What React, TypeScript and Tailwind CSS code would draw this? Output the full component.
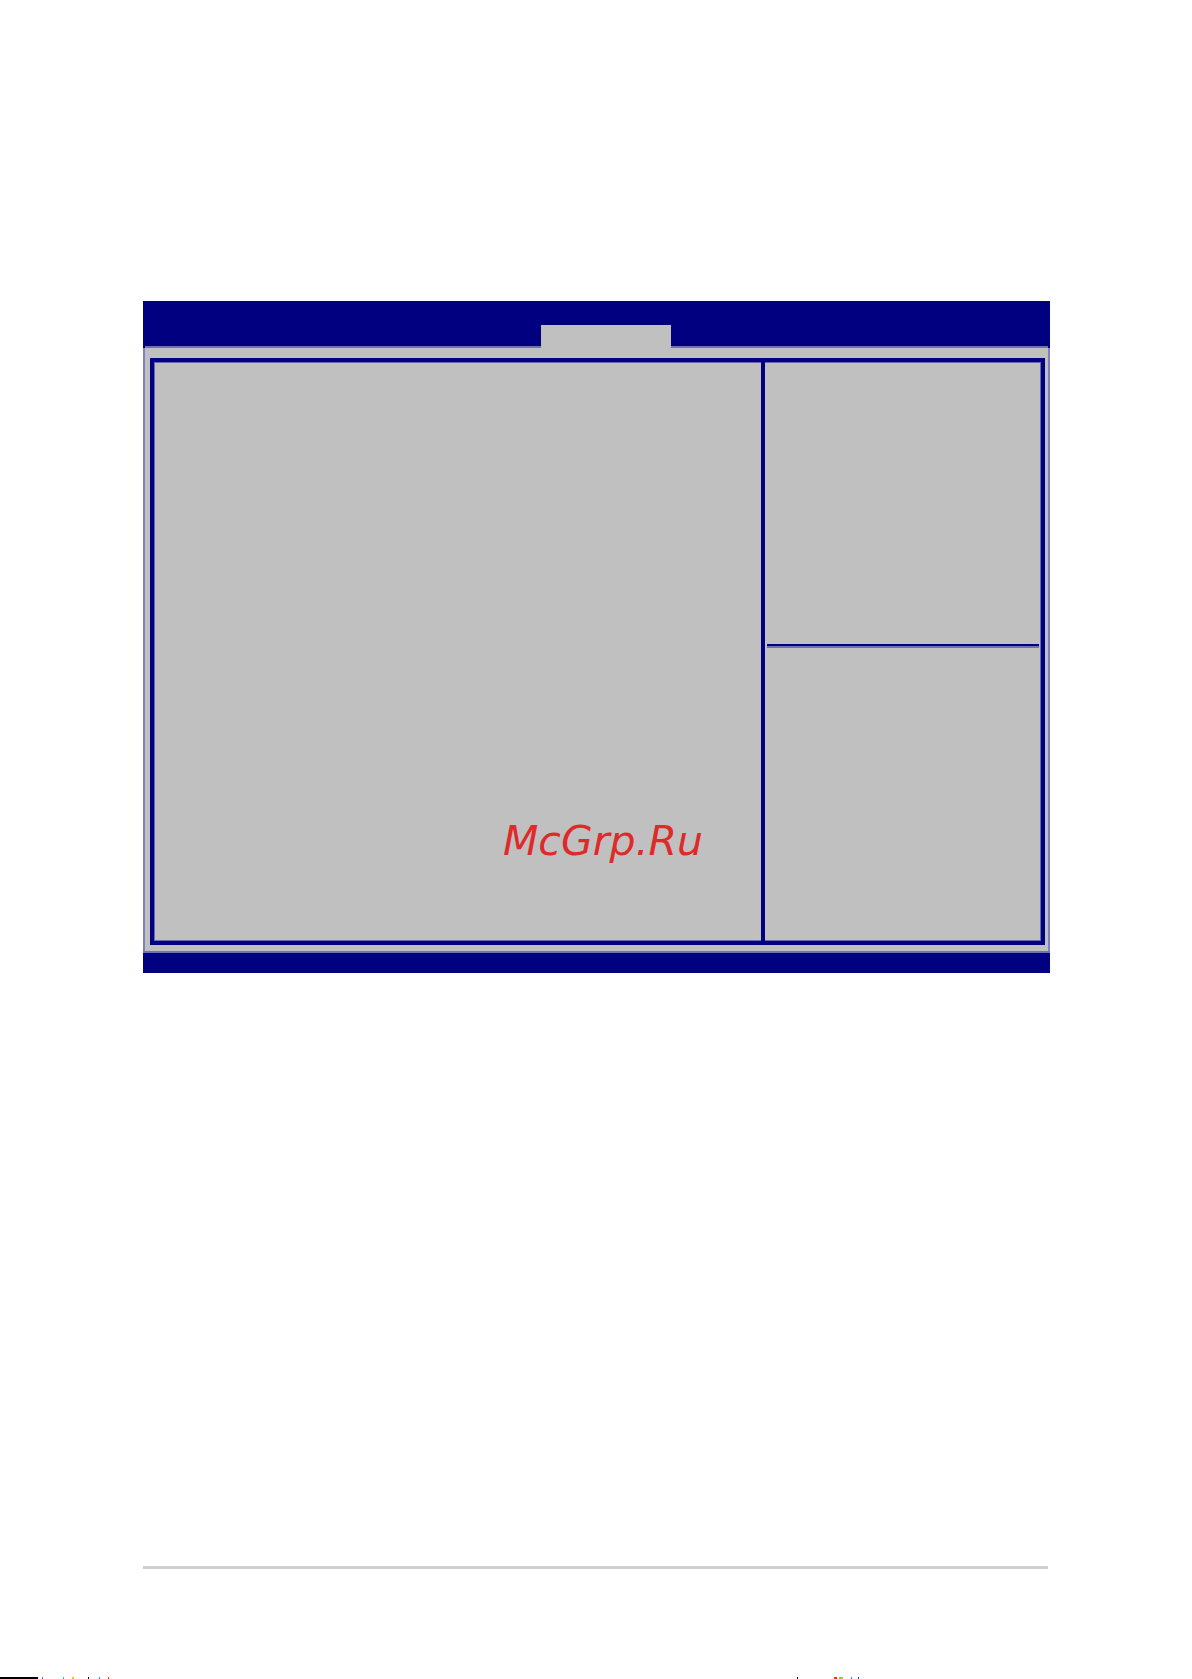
import React from 'react'

const NAVY = 'bg-[#000080]'

function Header() {
  return (
    <div className={`flex h-[47px] ${NAVY} border-x-2 border-[#000080]`}>
      <div className="w-[396px] border-b-2 border-[#7070b8]" />
      <div className="w-[130px] h-[23px] self-end bg-[#c0c0c0]" />
      <div className="flex-1 border-b-2 border-[#7070b8]" />
    </div>
  )
}

function Panels() {
  return (
    <div className="relative flex h-[587px] border-4 border-[#000080] bg-[#c0c0c0] shadow-[inset_0_0_0_1px_#6a6ab4]">
      {/* main area */}
      <div className="relative w-[607px]">
        <span
          className="absolute left-[349px] top-[459px] text-[41px] leading-[41px] italic whitespace-nowrap text-[#df2a2a]"
          style={{ fontFamily: '"DejaVu Sans", "Noto Sans", sans-serif' }}
        >
          McGrp.Ru
        </span>
      </div>
      <div className={`w-[4px] ${NAVY}`} />
      {/* help column */}
      <div className="w-[276px] flex flex-col px-[2px] pt-[282px]">
        <div className={`h-[2px] ${NAVY}`} />
        <div className="h-[2px] bg-[#6e6eb6]" />
      </div>
    </div>
  )
}

export default function App() {
  return (
    <div className="w-[1192px] h-[1679px] bg-white flex flex-col">
      <div className="pt-[301px] pl-[143px]">
        <div className="w-[907px]">
          <Header />
          <div className="bg-[#c0c0c0] border-x-2 border-[#8080c0] pt-[10px] pb-[6px] pl-[5px] pr-[3px]">
            <Panels />
          </div>
          <div className={`h-[22px] ${NAVY} border-t-2 border-[#7070b8]`} />
        </div>
      </div>

      <div className="mt-[593px] ml-[143px] w-[905px] h-[3px] bg-[#d0d0d0]" />

      {/* scan specks along the bottom edge */}
      <div className="mt-auto flex items-end h-[2px]">
        <div className="w-[38px] h-[2px] bg-black" />
        <div className="ml-[4px] w-[1px] h-[2px] bg-[#6060ff]" />
        <div className="ml-[20px] w-[1px] h-[2px] bg-[#00c0ff]" />
        <div className="ml-[8px] w-[2px] h-[2px] bg-[#ffc000]" />
        <div className="ml-[14px] w-[1px] h-[2px] bg-black" />
        <div className="ml-[10px] w-[1px] h-[2px] bg-[#00a0ff]" />
        <div className="ml-[8px] w-[1px] h-[2px] bg-[#ff4000]" />
        <div className="ml-[688px] w-[1px] h-[2px] bg-black" />
        <div className="ml-[36px] w-[3px] h-[2px] bg-[#ff3000]" />
        <div className="ml-[2px] w-[4px] h-[2px] bg-[#c0c000]" />
        <div className="ml-[8px] w-[1px] h-[2px] bg-[#00a0ff]" />
        <div className="ml-[6px] w-[1px] h-[2px] bg-[#0040ff]" />
      </div>
    </div>
  )
}
